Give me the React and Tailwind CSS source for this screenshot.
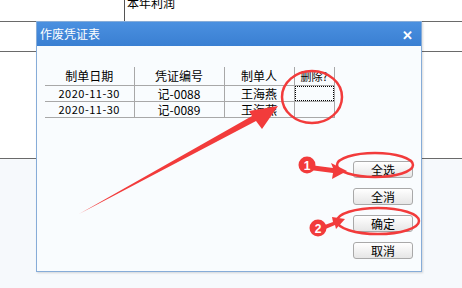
import React from 'react';

const rows = [
  { date: '2020-11-30', no: '记-0088', maker: '王海燕' },
  { date: '2020-11-30', no: '记-0089', maker: '王海燕' },
];

const buttons = ['全选', '全消', '确定', '取消'];

const Annotations = () => (
  <svg className="absolute inset-0 pointer-events-none" width="462" height="288" viewBox="0 0 462 288">
    {/* big arrow to the delete column */}
    <polygon points="79,214 252,116 249,111 278,106 262,129 256,121" fill="#f23b3b" />
    <ellipse cx="312" cy="97" rx="30" ry="26" fill="none" stroke="#f23b3b" strokeWidth="2.5" />

    {/* step 1 */}
    <ellipse cx="375" cy="165" rx="38" ry="12" fill="none" stroke="#f23b3b" strokeWidth="2.5" />
    <polygon points="310,165 333,168 331,163 347,171 332,179 333,173 310,170" fill="#f23b3b" />
    <circle cx="307" cy="165" r="8.5" fill="#f23b3b" />
    <text x="307" y="169.5" textAnchor="middle" fontSize="12" fontWeight="700" fill="#fff" fontFamily="'Liberation Sans', sans-serif">1</text>

    {/* step 2 */}
    <ellipse cx="378" cy="221" rx="41" ry="13" fill="none" stroke="#f23b3b" strokeWidth="2.5" />
    <polygon points="322,226 333,222 332,217 345,219 336,229 335,225 323,230" fill="#f23b3b" />
    <circle cx="318" cy="228" r="8.5" fill="#f23b3b" />
    <text x="318" y="232.5" textAnchor="middle" fontSize="12" fontWeight="700" fill="#fff" fontFamily="'Liberation Sans', sans-serif">2</text>
  </svg>
);

const Dialog = () => (
  <div className="absolute left-[36px] top-[21px] w-[386px] h-[251px] flex flex-col border border-[#86acd8] bg-[#f9fcfe] shadow-[1px_1px_2px_rgba(0,0,0,0.15)]">
    {/* title bar */}
    <div className="h-[24px] flex items-center justify-between px-[3px] bg-gradient-to-b from-[#4a90e0] to-[#3a7fd2] text-white">
      <span className="text-[12px]">作废凭证表</span>
      <span className="mr-[5px] text-[13px] font-bold leading-none">✕</span>
    </div>

    <div className="flex-1 flex flex-col">
      {/* table */}
      <table className="mt-[21px] ml-[8px] w-[289px] border-collapse text-[12px] text-black table-fixed">
        <colgroup>
          <col className="w-[89px]" />
          <col className="w-[90px]" />
          <col className="w-[70px]" />
          <col className="w-[40px]" />
        </colgroup>
        <thead>
          <tr className="h-[16px]">
            <th className="font-normal border-r border-b border-[#a8a8a8]">制单日期</th>
            <th className="font-normal border-r border-b border-[#a8a8a8]">凭证编号</th>
            <th className="font-normal border-r border-b border-[#a8a8a8]">制单人</th>
            <th className="font-normal border-r border-b border-[#a8a8a8] text-[11px]">删除?</th>
          </tr>
        </thead>
        <tbody>
          {rows.map((r, i) => (
            <tr key={r.no} className="h-[16px] leading-none">
              <td className="text-center border-r border-b border-[#a8a8a8] text-[11px] tracking-[0.5px]">{r.date}</td>
              <td className="text-center border-r border-b border-[#a8a8a8]">{r.no}</td>
              <td className="text-center border-r border-b border-[#a8a8a8]">{r.maker}</td>
              <td className="border-r border-b border-[#a8a8a8] p-0">
                {i === 0 && <div className="h-[15px] w-full border border-dotted border-black" />}
              </td>
            </tr>
          ))}
        </tbody>
      </table>

      {/* buttons */}
      <div className="self-end mr-[8px] mt-[43px] flex flex-col gap-[10px]">
        {buttons.map((b) => (
          <button
            key={b}
            className="w-[60px] h-[17px] rounded-[3px] border border-[#a9a9a9] bg-gradient-to-b from-white to-[#e6e6e6] text-[12px] leading-none text-black"
          >
            {b}
          </button>
        ))}
      </div>
    </div>
  </div>
);

export default function App() {
  return (
    <div className="relative w-[462px] h-[288px] overflow-hidden bg-white font-['Noto_Sans_CJK_SC',sans-serif]">
      {/* sheet behind the dialog */}
      <div className="h-[22px] border-b border-[#6a6a6a] flex">
        <div className="w-[125px] border-r border-[#555]" />
        <span className="ml-[2px] -mt-[6px] text-[12px] text-black">本年利润</span>
      </div>
      <div className="h-[30px] border-b border-[#6a6a6a]" />
      <div className="h-[107px] border-b border-[#6a6a6a]" />
      <div className="h-[129px] bg-[#f6f9fc]" />

      <Dialog />
      <Annotations />
    </div>
  );
}
